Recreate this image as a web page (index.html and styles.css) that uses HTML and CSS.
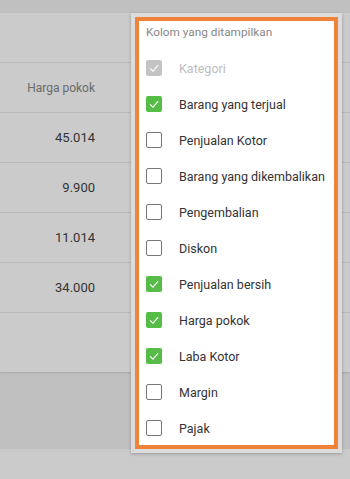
FILE: index.html
```html
<!DOCTYPE html>
<html>
<head>
<meta charset="utf-8">
<link rel="stylesheet" href="styles.css">
</head>
<body>
<div class="page">
  <div class="card">
    <div class="row blank"></div>
    <div class="row head"><span class="cell">Harga pokok</span></div>
    <div class="row"><span class="cell">45.014</span></div>
    <div class="row"><span class="cell">9.900</span></div>
    <div class="row"><span class="cell">11.014</span></div>
    <div class="row"><span class="cell">34.000</span></div>
    <div class="row foot"></div>
  </div>
  <div class="gap"></div>
  <div class="bottom"></div>

  <div class="menu">
    <div class="menu-inner">
      <div class="menu-title">Kolom yang ditampilkan</div>
      <div class="item disabled"><span class="cb on"><svg viewBox="0 0 16 16"><path d="M4 8.3 L7 11.2 L12.2 5.2"/></svg></span><span class="label">Kategori</span></div>
      <div class="item"><span class="cb on green"><svg viewBox="0 0 16 16"><path d="M4 8.3 L7 11.2 L12.2 5.2"/></svg></span><span class="label">Barang yang terjual</span></div>
      <div class="item"><span class="cb"></span><span class="label">Penjualan Kotor</span></div>
      <div class="item"><span class="cb"></span><span class="label">Barang yang dikembalikan</span></div>
      <div class="item"><span class="cb"></span><span class="label">Pengembalian</span></div>
      <div class="item"><span class="cb"></span><span class="label">Diskon</span></div>
      <div class="item"><span class="cb on green"><svg viewBox="0 0 16 16"><path d="M4 8.3 L7 11.2 L12.2 5.2"/></svg></span><span class="label">Penjualan bersih</span></div>
      <div class="item"><span class="cb on green"><svg viewBox="0 0 16 16"><path d="M4 8.3 L7 11.2 L12.2 5.2"/></svg></span><span class="label">Harga pokok</span></div>
      <div class="item"><span class="cb on green"><svg viewBox="0 0 16 16"><path d="M4 8.3 L7 11.2 L12.2 5.2"/></svg></span><span class="label">Laba Kotor</span></div>
      <div class="item"><span class="cb"></span><span class="label">Margin</span></div>
      <div class="item"><span class="cb"></span><span class="label">Pajak</span></div>
    </div>
  </div>
</div>
</body>
</html>
```
FILE: styles.css
```css
html, body {
  margin: 0;
  padding: 0;
}
body {
  background: #c0c0c0;
  font-family: Roboto, "Liberation Sans", sans-serif;
  width: 350px;
  height: 479px;
  overflow: hidden;
}
.page {
  position: relative;
  width: 350px;
  height: 479px;
  padding-top: 13px;
  box-sizing: border-box;
}
.card {
  background: #cbcbcb;
  height: 359px;
  box-shadow: 0 1px 2px rgba(0,0,0,0.12);
  display: flex;
  flex-direction: column;
}
.row {
  height: 49px;
  border-bottom: 1px solid #b9b9b9;
  display: flex;
  align-items: center;
  width: 100%;
}
.row .cell {
  width: 95px;
  text-align: right;
  font-size: 13px;
  color: #333;
}
.row.head .cell {
  font-size: 12px;
  color: #6a6a6a;
}
.row.foot {
  border-bottom: none;
  flex: 1;
}
.gap {
  height: 77px;
}
.bottom {
  height: 30px;
  background: #cbcbcb;
}
.menu {
  position: absolute;
  left: 131px;
  top: 13px;
  width: 211px;
  height: 440px;
  box-sizing: border-box;
  background: #fff;
  border: 4px solid #dcdcdc;
  box-shadow: 0 1px 3px rgba(0,0,0,0.25);
}
.menu-inner {
  border: 4px solid #f0823a;
  height: 100%;
  box-sizing: border-box;
  padding-left: 7px;
  background: #fff;
}
.menu-title {
  height: 29px;
  padding-top: 3px;
  box-sizing: border-box;
  line-height: 16px;
  font-size: 11.8px;
  color: #888;
}
.item {
  height: 36px;
  display: flex;
  align-items: center;
  gap: 17px;
}
.cb {
  width: 16px;
  height: 16px;
  box-sizing: border-box;
  border: 1px solid #777;
  border-radius: 2px;
  background: #fff;
  flex: none;
  display: flex;
}
.cb.on {
  border: none;
  background: #c4c4c4;
}
.cb.on.green {
  background: #55bd45;
}
.cb svg {
  width: 16px;
  height: 16px;
}
.cb svg path {
  fill: none;
  stroke: #fff;
  stroke-width: 1.1;
}
.label {
  font-size: 12.5px;
  color: #333;
}
.item.disabled .label {
  color: #bdbdbd;
}
```
